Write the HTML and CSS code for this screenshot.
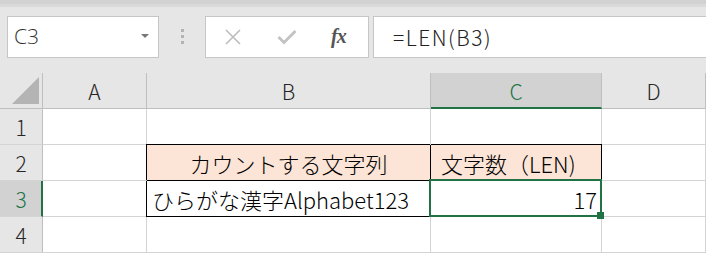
FILE: index.html
```html
<!DOCTYPE html>
<html lang="ja">
<head>
<meta charset="utf-8">
<link rel="stylesheet" href="styles.css">
</head>
<body>
<div class="app">
  <div class="topband"></div>
  <div class="fbar">
    <div class="namebox">
      <span class="nb-text">C3</span>
      <svg class="nb-arrow" width="8" height="5" viewBox="0 0 8 5"><polygon points="0,0 8,0 4,4" fill="#777"/></svg>
    </div>
    <div class="dots"><i></i><i></i><i></i></div>
    <div class="btns">
      <svg class="ico-x" width="16" height="16" viewBox="0 0 16 16"><path d="M1 1 L15 15 M15 1 L1 15" stroke="#bdbdbd" stroke-width="1.6" fill="none"/></svg>
      <svg class="ico-ok" width="20" height="16" viewBox="0 0 20 16"><path d="M1.5 8 L7 13.5 L18.5 2" stroke="#c3c3c3" stroke-width="3" fill="none"/></svg>
      <span class="fx">fx</span>
    </div>
    <div class="formula">=LEN(B3)</div>
  </div>
  <div class="sheet">
    <div class="hd corner"><svg width="42" height="35" viewBox="0 0 42 35"><polygon points="12,31 39,4 39,31" fill="#b4b4b4"/></svg></div>
    <div class="hd col">A</div>
    <div class="hd col">B</div>
    <div class="hd col sel-col">C</div>
    <div class="hd col">D</div>

    <div class="hd row">1</div>
    <div class="c"></div>
    <div class="c"></div>
    <div class="c"></div>
    <div class="c"></div>

    <div class="hd row">2</div>
    <div class="c"></div>
    <div class="c title b2">カウントする文字列</div>
    <div class="c title c2">文字数（LEN)</div>
    <div class="c"></div>

    <div class="hd row sel-row">3</div>
    <div class="c"></div>
    <div class="c b3">ひらがな漢字Alphabet123</div>
    <div class="c c3">17<span class="handle"></span></div>
    <div class="c"></div>

    <div class="hd row">4</div>
    <div class="c"></div>
    <div class="c"></div>
    <div class="c"></div>
    <div class="c"></div>
  </div>
</div>
</body>
</html>
```

FILE: styles.css
```css
* { box-sizing: border-box; }
html, body { margin: 0; padding: 0; }
body {
  background: #e6e6e6;
  width: 706px;
  height: 253px;
  overflow: hidden;
  font-family: "Noto Sans CJK JP", "Noto Sans", sans-serif;
}
.app { width: 706px; }
.topband {
  height: 7px;
  background: linear-gradient(#d2d2d2 0, #d2d2d2 4px, #dadada 4px, #dadada 7px);
}
.fbar {
  margin-top: 9px;
  height: 42px;
  display: flex;
  padding-left: 7px;
}
.namebox {
  width: 152px;
  height: 42px;
  background: #fff;
  border: 1px solid #c6c6c6;
  display: flex;
  align-items: center;
  justify-content: space-between;
  padding: 0 9px 2px 6px;
}
.nb-text {
  font-family: "Open Sans", "Noto Sans", sans-serif;
  font-size: 21px;
  font-weight: 300;
  color: #333;
}
.dots {
  width: 46px;
  display: flex;
  flex-direction: column;
  align-items: center;
  justify-content: center;
  gap: 3px;
  padding-bottom: 1px;
}
.dots i {
  display: block;
  width: 3px;
  height: 3px;
  background: #b4b4b4;
}
.btns {
  width: 164px;
  height: 42px;
  background: #fff;
  border: 1px solid #c6c6c6;
  display: flex;
  align-items: center;
  padding-left: 19px;
}
.ico-x { margin-right: 36px; }
.ico-ok { margin-right: 34px; }
.fx {
  font-family: "Liberation Serif", serif;
  font-style: italic;
  font-weight: bold;
  font-size: 20px;
  color: #555;
  margin-top: -2px;
  letter-spacing: -1px;
}
.formula {
  flex: 1;
  margin-left: 4px;
  margin-right: -10px;
  height: 42px;
  background: #fff;
  border: 1px solid #c6c6c6;
  padding-left: 19px;
  display: flex;
  align-items: center;
  font-size: 21px;
  font-weight: 300;
  letter-spacing: 1.5px;
  color: #222;
}
.sheet {
  margin-top: 15px;
  display: grid;
  grid-template-columns: 43px 104px 284px 171px 104px;
  grid-template-rows: repeat(5, 36px);
}
.hd {
  background: #e6e6e6;
  border-right: 1px solid #bfbfbf;
  border-bottom: 1px solid #bfbfbf;
  color: #262626;
  font-size: 21px;
  font-weight: 300;
  display: flex;
  align-items: center;
  justify-content: center;
}
.row { border-bottom-color: #d4d4d4; }
.corner { align-items: flex-start; justify-content: flex-start; }
.corner svg { display: block; }
.sel-col {
  background: #d2d2d2;
  color: #217346;
  border-bottom: 2px solid #217346;
  padding-top: 1px;
}
.sel-row {
  background: #d2d2d2;
  color: #217346;
  border-right: 2px solid #217346;
  padding-left: 1px;
}
.c {
  background: #fff;
  border-right: 1px solid #d4d4d4;
  border-bottom: 1px solid #d4d4d4;
  font-size: 22px;
  font-weight: 300;
  color: #000;
  display: flex;
  align-items: center;
  white-space: nowrap;
  padding-top: 1px;
}
.title {
  background: #fce4d6;
  border-right-color: #000;
  border-bottom-color: #000;
}
.b2 { justify-content: center; box-shadow: -1px -1px 0 0 #000; }
.c2 { padding-left: 10px; box-shadow: 0 -1px 0 0 #000; }
.b3 {
  border-right-color: #000;
  border-bottom-color: #000;
  box-shadow: -1px 0 0 0 #000;
  padding-left: 5px;
}
.c3 {
  position: relative;
  justify-content: flex-end;
  padding-right: 4px;
}
.c3::after {
  content: "";
  position: absolute;
  left: -2px;
  top: -2px;
  right: -1px;
  bottom: -1px;
  border: 2px solid #217346;
}
.handle {
  position: absolute;
  right: -3px;
  bottom: -3px;
  width: 7px;
  height: 7px;
  background: #217346;
  z-index: 1;
}
```
